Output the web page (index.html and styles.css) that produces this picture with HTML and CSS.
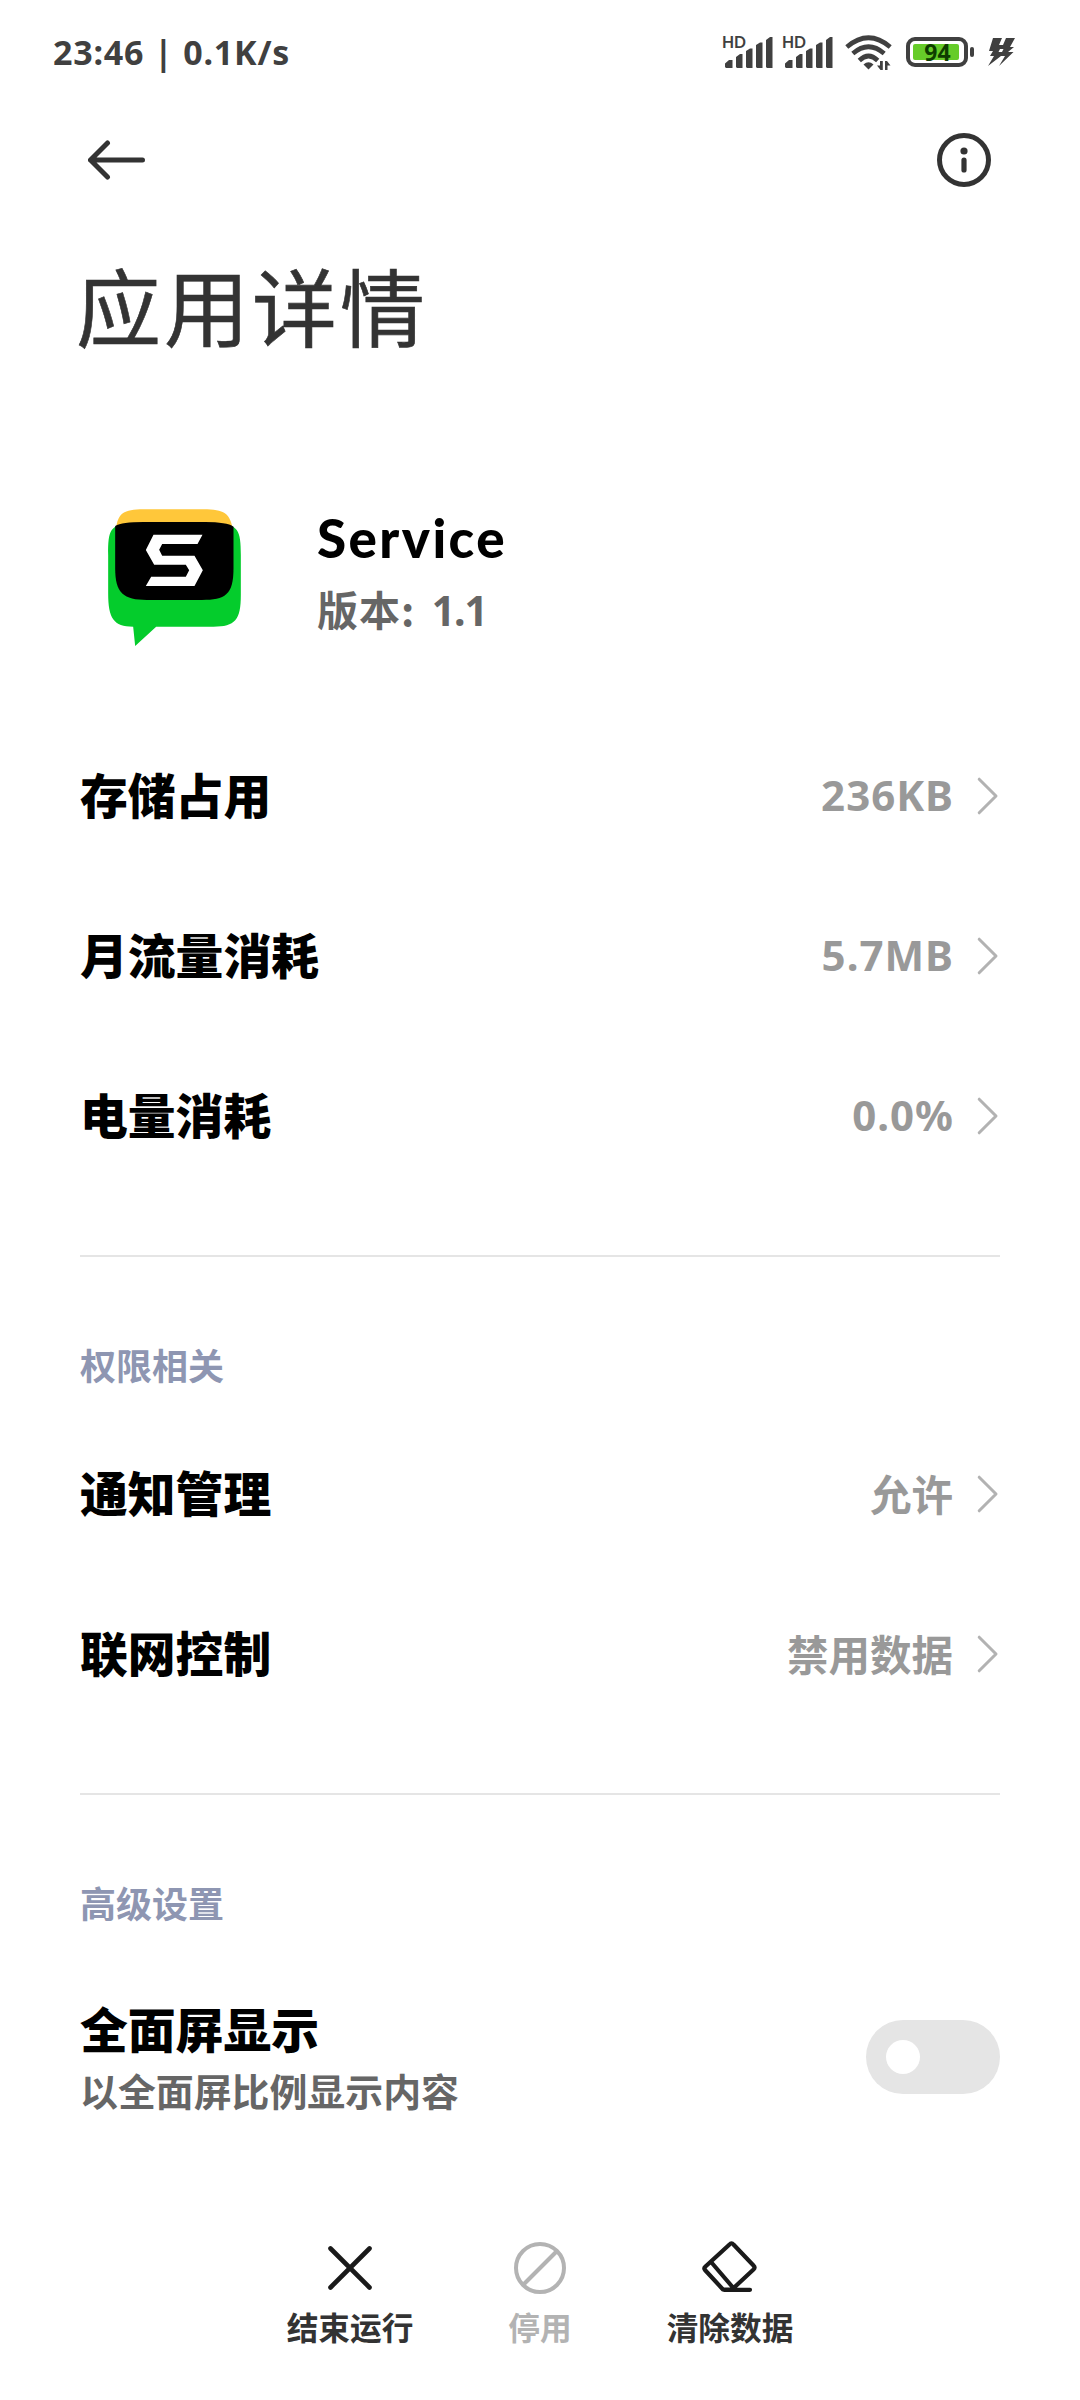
FILE: index.html
```html
<!DOCTYPE html>
<html lang="zh-CN">
<head>
    <meta charset="UTF-8">
    <meta name="viewport" content="width=device-width, initial-scale=1.0">
    <title>应用详情</title>
    <link rel="stylesheet" href="styles.css">
</head>
<body>
    <svg width="0" height="0" class="sprite">
        <symbol id="chevron" viewBox="0 0 22 38">
            <path d="M2.200 2.200L19 19L2.200 35.800" fill="none" stroke="#b2b2b2" stroke-width="3" stroke-linecap="round" stroke-linejoin="round"/>
        </symbol>
    </svg>

    <div class="page">
        <!-- 状态栏 -->
        <div class="status-bar">
            <div class="status-time">23:46 | 0.1K/s</div>
            <div class="status-icons">
                <svg class="icon-signal" viewBox="0 0 52 34">
                    <text x="-1" y="13" class="hd-text" textLength="24" lengthAdjust="spacingAndGlyphs">HD</text>
                    <path d="M2 32V28.500L6 25H9.500V33H3ZM13 32V22L17 19H19.500V33H14ZM23 32V16L27 13.500H29.500V33H24ZM33 32V10L37 7.500H39.500V33H34ZM43 32V5L47 2H49.500V33H44Z"/>
                </svg>
                <svg class="icon-signal" viewBox="0 0 52 34">
                    <text x="-1" y="13" class="hd-text" textLength="24" lengthAdjust="spacingAndGlyphs">HD</text>
                    <path d="M2 32V28.500L6 25H9.500V33H3ZM13 32V22L17 19H19.500V33H14ZM23 32V16L27 13.500H29.500V33H24ZM33 32V10L37 7.500H39.500V33H34ZM43 32V5L47 2H49.500V33H44Z"/>
                </svg>
                <svg class="icon-wifi" viewBox="0 0 47 36">
                    <g fill="none" stroke="#404040" stroke-width="4.600">
                        <path d="M1.800 12Q23.500 -6.500 45.200 12"/>
                        <path d="M7.800 18.500Q23.500 5 39.200 18.500"/>
                        <path d="M14.300 25.500Q23.500 16.500 32.700 25.500"/>
                    </g>
                    <path d="M18.500 29.500Q23.500 25 28.500 29.500L23.500 34.500Z"/>
                    <path d="M35 26H37.800V35H35.500L32 30.500H35ZM40 26H42L45.500 30.500H42.500V35H40Z"/>
                </svg>
                <div class="battery">
                    <div class="battery-body">
                        <div class="battery-level">94</div>
                    </div>
                    <div class="battery-cap"></div>
                </div>
                <svg class="icon-bolt" viewBox="0 0 28 30">
                    <path d="M5 0H14L11 7H15L18 0H27L22 9H26L20 14H25.500L11 28L17 18H13L0 28L6 18H2L5 13H1Z"/>
                    <path d="M12 11L10.500 14H14L15.500 11Z" fill="#fff"/>
                </svg>
            </div>
        </div>

        <!-- 导航 -->
        <div class="nav-bar">
            <svg class="icon-back" viewBox="0 0 58 40">
                <path d="M19.500 3L2.500 20L19.500 37M2.500 20H54.500" fill="none" stroke="#333" stroke-width="5" stroke-linecap="round" stroke-linejoin="round"/>
            </svg>
            <svg class="icon-info" viewBox="0 0 54 54">
                <circle cx="27" cy="27" r="24.500" fill="none" stroke="#333" stroke-width="5"/>
                <circle cx="27" cy="18" r="3.600" fill="#333"/>
                <path d="M27 27V37" stroke="#333" stroke-width="5.200" stroke-linecap="round"/>
            </svg>
        </div>

        <h1 class="page-title">应用详情</h1>

        <div class="app-info">
            <svg class="app-logo" viewBox="84 87 398 411">
                <path d="M84 225C84 150 88 131 160 131H405C475 131 482 150 482 225V345C482 420 465 440 400 440H228L165 498L159 440C100 440 84 415 84 340Z" fill="#04cc2c"/>
                <path d="M107 150C112 100 130 88 190 88H370C432 88 450 100 458 150Z" fill="#ffc73a"/>
                <path d="M105 138Q125 126 190 126H375Q440 126 460 140V265C460 345 435 360 365 360H200C130 360 105 340 105 265Z" fill="#000"/>
                <path d="M220 164H367L352 192H246L237 209L246 227H343L368 271L343 318H197L213 290H317L327 271L317 254H222L197 210Z" fill="#fff"/>
            </svg>
            <div class="app-text">
                <div class="app-name">Service</div>
                <div class="app-version">版本: <span class="version-num">1.1</span></div>
            </div>
        </div>

        <div class="section usage">
            <div class="row">
                <span class="row-label">存储占用</span>
                <span class="row-value latin">236KB</span>
                <svg class="chevron"><use href="#chevron"/></svg>
            </div>
            <div class="row">
                <span class="row-label">月流量消耗</span>
                <span class="row-value latin">5.7MB</span>
                <svg class="chevron"><use href="#chevron"/></svg>
            </div>
            <div class="row">
                <span class="row-label">电量消耗</span>
                <span class="row-value latin">0.0%</span>
                <svg class="chevron"><use href="#chevron"/></svg>
            </div>
        </div>

        <div class="section">
            <h2 class="section-title">权限相关</h2>
            <div class="row">
                <span class="row-label">通知管理</span>
                <span class="row-value">允许</span>
                <svg class="chevron"><use href="#chevron"/></svg>
            </div>
            <div class="row">
                <span class="row-label">联网控制</span>
                <span class="row-value">禁用数据</span>
                <svg class="chevron"><use href="#chevron"/></svg>
            </div>
        </div>

        <div class="section">
            <h2 class="section-title">高级设置</h2>
            <div class="row row-switch">
                <div class="row-text">
                    <div class="row-label">全面屏显示</div>
                    <div class="row-desc">以全面屏比例显示内容</div>
                </div>
                <div class="switch"><div class="switch-thumb"></div></div>
            </div>
        </div>

        <!-- 底部操作栏 -->
        <div class="action-bar">
            <div class="action">
                <svg class="action-icon" viewBox="0 0 60 60">
                    <path d="M10.500 10.500L49.500 49.500M49.500 10.500L10.500 49.500" stroke="#1a1a1a" stroke-width="4.600" stroke-linecap="round"/>
                </svg>
                <span>结束运行</span>
            </div>
            <div class="action disabled">
                <svg class="action-icon" viewBox="0 0 60 60">
                    <path d="M46.500 13.500L13.500 46.500" stroke="#b3b3b3" stroke-width="4"/>
                    <circle cx="30" cy="30" r="24" fill="none" stroke="#b3b3b3" stroke-width="4"/>
                </svg>
                <span>停用</span>
            </div>
            <div class="action">
                <svg class="action-icon" viewBox="0 0 60 60">
                    <path d="M29.500 6.500Q31.500 4 33.500 6.500L53.500 27.500Q55.500 29.500 53.500 31.500L32 51.500H23L5 32Q3.500 30 5.500 28.500ZM11.500 24.500L33 49.500M24 51.800H50" fill="none" stroke="#1a1a1a" stroke-width="4.200" stroke-linecap="round" stroke-linejoin="round"/>
                </svg>
                <span>清除数据</span>
            </div>
        </div>
    </div>
</body>
</html>
```
FILE: styles.css
```css
* {
    box-sizing: border-box;
}
body {
    margin: 0;
    background: #fff;
    color: #000;
    font-family: "Noto Sans CJK SC", sans-serif;
}
svg {
    display: block;
    flex: none;
}
.sprite {
    position: absolute;
}
.page {
    display: flex;
    flex-direction: column;
    width: 1080px;
    height: 2400px;
    overflow: hidden;
}

/* 状态栏 */
.status-bar {
    display: flex;
    justify-content: space-between;
    height: 100px;
    padding: 0 64px 0 53px;
    color: #404040;
}
.status-time {
    padding-top: 29px;
    font-family: "Noto Sans", sans-serif;
    font-size: 34px;
    font-weight: 700;
    line-height: 46px;
    letter-spacing: 0.800px;
    white-space: nowrap;
}
.status-icons {
    display: flex;
    padding-top: 35px;
}
.icon-signal {
    width: 52px;
    height: 34px;
    margin-right: 8px;
    fill: #404040;
    overflow: visible;
}
.hd-text {
    font-family: Lato, sans-serif;
    font-size: 17px;
    font-weight: 700;
}
.icon-wifi {
    width: 47px;
    height: 36px;
    margin: 0 14px 0 2px;
    fill: #404040;
}
.battery {
    display: flex;
    align-items: center;
    gap: 2px;
    height: 30px;
    margin: 2px 14px 0 0;
}
.battery-body {
    width: 62px;
    height: 30px;
    padding: 3px;
    border: 4px solid #404040;
    border-radius: 9px;
}
.battery-level {
    width: 46px;
    height: 16px;
    border-radius: 2px;
    background: #66cc29;
    color: #0e3d00;
    font-family: "Noto Sans", sans-serif;
    font-size: 23px;
    font-weight: 700;
    line-height: 17px;
    text-align: center;
    padding-left: 3px;
}
.battery-cap {
    width: 4px;
    height: 10px;
    border-radius: 2px;
    background: #404040;
}
.icon-bolt {
    width: 28px;
    height: 30px;
    margin-top: 3px;
    fill: #404040;
}

.nav-bar {
    display: flex;
    align-items: center;
    justify-content: space-between;
    height: 120px;
    padding: 0 89px 0 88px;
}
.icon-back {
    width: 58px;
    height: 40px;
}
.icon-info {
    width: 54px;
    height: 54px;
}
.page-title {
    margin: 0;
    padding: 22px 0 0 76px;
    color: #333;
    font-size: 85px;
    font-weight: 400;
    line-height: 124px;
    letter-spacing: 3px;
    -webkit-text-stroke: 0.600px #333;
}

/* 应用信息 */
.app-info {
    display: flex;
    gap: 76px;
    padding: 143px 80px 0 108px;
}
.app-logo {
    width: 133px;
    height: 137px;
}
.app-name {
    font-family: Lato, sans-serif;
    font-size: 53px;
    font-weight: 900;
    line-height: 58px;
    letter-spacing: 2.400px;
}
.app-version {
    padding-top: 11px;
    color: #666;
    font-size: 41px;
    font-weight: 700;
    line-height: 60px;
    letter-spacing: 1px;
    white-space: nowrap;
}
.version-num {
    margin-left: 6px;
    font-family: "Noto Sans", sans-serif;
    font-weight: 700;
    letter-spacing: -1px;
}

.section {
    padding: 0 80px;
}
.usage {
    padding-top: 70px;
}
.section + .section {
    margin-top: 59px;
}
.section + .section::before {
    content: "";
    display: block;
    height: 2px;
    background: #e5e5e5;
}
.section-title {
    margin: 0;
    padding-top: 79px;
    color: #8e96b2;
    font-size: 36px;
    font-weight: 700;
    line-height: 56px;
    height: 157px;
}
.row {
    display: flex;
    align-items: center;
    height: 160px;
}
.row-label {
    padding-bottom: 5px;
    font-size: 47.800px;
    font-weight: 900;
    line-height: 70px;
}
.row-value {
    margin-left: auto;
    padding-bottom: 2px;
    color: #999;
    font-size: 41.500px;
    font-weight: 700;
    line-height: 62px;
}
.row-value.latin {
    margin-right: -1px;
    font-family: "Noto Sans", sans-serif;
    font-size: 42px;
    letter-spacing: 1px;
    font-weight: 700;
}
.chevron {
    width: 22px;
    height: 38px;
    margin: 0 1px 0 24px;
}
.row-switch {
    height: 210px;
    justify-content: space-between;
}
.row-switch .row-label {
    padding-bottom: 0;
}
.row-desc {
    padding-bottom: 4px;
    color: #666;
    font-size: 37.900px;
    font-weight: 700;
    line-height: 54px;
}
.switch {
    display: flex;
    align-items: center;
    width: 134px;
    height: 74px;
    padding: 0 20px;
    border-radius: 37px;
    background: #e5e5e5;
}
.switch-thumb {
    width: 34px;
    height: 34px;
    border-radius: 50%;
    background: #fff;
}

/* 底部操作栏 */
.action-bar {
    display: flex;
    justify-content: center;
    height: 162px;
    margin-top: auto;
}
.action {
    display: flex;
    flex-direction: column;
    align-items: center;
    width: 190px;
    color: #333;
    font-size: 31.700px;
    font-weight: 700;
    line-height: 48px;
}
.action-icon {
    width: 60px;
    height: 60px;
    margin-bottom: 4px;
}
.action.disabled {
    color: #b3b3b3;
}
```
